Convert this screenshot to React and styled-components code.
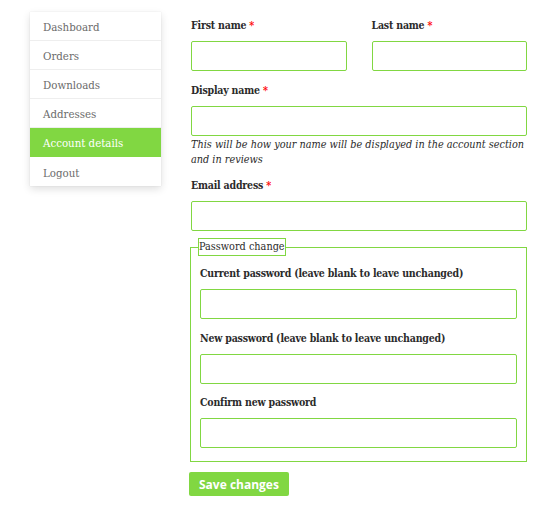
import styled, { createGlobalStyle } from "styled-components"

const GREEN = "#81d742"

const GlobalStyle = createGlobalStyle`
  html, body {
    margin: 0;
    padding: 0;
    background: #fff;
  }
  body {
    font-family: "DejaVu Serif Condensed", "DejaVu Serif", serif;
    color: #2b2b2b;
  }
`

const Page = styled.div`
  display: flex;
  align-items: flex-start;
  gap: 30px;
  padding: 12px 0 0 30px;
`

const Nav = styled.nav`
  width: 131px;
  flex-shrink: 0;
  background: #fff;
  box-shadow: 0 3px 8px rgba(0, 0, 0, 0.13), 0 0 1px rgba(0, 0, 0, 0.12);
`

const NavList = styled.ul`
  list-style: none;
  margin: 0;
  padding: 0;
`

const NavItem = styled.li`
  height: 29px;
  box-sizing: border-box;
  display: flex;
  align-items: center;
  padding: 2px 0 0 13px;
  font-size: 11.4px;
  color: ${props => (props.$active ? "#fff" : "#6b6b6b")};
  background: ${props => (props.$active ? GREEN : "transparent")};
  border-bottom: 1px solid ${props => (props.$active ? GREEN : "#eeeeee")};

  &:last-child {
    border-bottom: none;
  }
`

const Form = styled.form`
  width: 336px;
  padding-top: 5px;
  display: flex;
  flex-direction: column;
`

const FormRow = styled.div`
  display: flex;
  gap: 25px;
  margin-bottom: ${props => props.$spacing ?? "10.5px"};
`

const FormGroup = styled.div`
  display: flex;
  flex-direction: column;
  flex: 1;
  min-width: 0;
`

const Label = styled.label`
  font-size: 10.5px;
  font-weight: bold;
  letter-spacing: -0.2px;
  line-height: 16px;
  margin-bottom: 8px;
  color: #2b2b2b;
  white-space: nowrap;
`

const Required = styled.span`
  color: #ff0000;
`

const Input = styled.input`
  box-sizing: border-box;
  height: 30px;
  width: 100%;
  border: 1px solid ${GREEN};
  border-radius: 2px;
  background: #fff;
  padding: 0 8px;
  font: inherit;
  outline: none;
`

const Help = styled.em`
  margin-top: 1px;
  font-size: 10.8px;
  line-height: 15.4px;
  color: #2b2b2b;
`

const Fieldset = styled.fieldset`
  margin: 0 0 10px -1px;
  padding: 9px 9px 13px 9px;
  border: 1px solid ${GREEN};
  min-width: 0;
`

const Legend = styled.legend`
  font-size: 10.8px;
  line-height: 16px;
  padding: 0;
  margin-left: -2px;
  border: 1px solid ${GREEN};
  color: #2b2b2b;
`

const Button = styled.button`
  align-self: flex-start;
  margin-left: -2px;
  height: 24px;
  padding: 0 10px;
  border: none;
  border-radius: 2px;
  background: ${GREEN};
  color: #fff;
  font-family: "Open Sans", "DejaVu Sans", sans-serif;
  font-weight: bold;
  font-size: 12px;
`

const menu = [
  "Dashboard",
  "Orders",
  "Downloads",
  "Addresses",
  "Account details",
  "Logout",
]

function Field({ label, required, children }) {
  return (
    <FormGroup>
      <Label>
        {label} {required && <Required>*</Required>}
      </Label>
      <Input type="text" />
      {children}
    </FormGroup>
  )
}

export default function App() {
  return (
    <>
      <GlobalStyle />
      <Page>
        <Nav>
          <NavList>
            {menu.map(item => (
              <NavItem key={item} $active={item === "Account details"}>
                {item}
              </NavItem>
            ))}
          </NavList>
        </Nav>
        <Form onSubmit={e => e.preventDefault()}>
          <FormRow>
            <Field label="First name" required />
            <Field label="Last name" required />
          </FormRow>
          <FormRow $spacing="10px">
            <Field label="Display name" required>
              <Help>
                This will be how your name will be displayed in the account
                section and in reviews
              </Help>
            </Field>
          </FormRow>
          <FormRow $spacing="7px">
            <Field label="Email address" required />
          </FormRow>
          <Fieldset>
            <Legend>Password change</Legend>
            <FormRow>
              <Field label="Current password (leave blank to leave unchanged)" />
            </FormRow>
            <FormRow>
              <Field label="New password (leave blank to leave unchanged)" />
            </FormRow>
            <FormRow $spacing="0">
              <Field label="Confirm new password" />
            </FormRow>
          </Fieldset>
          <Button type="submit">Save changes</Button>
        </Form>
      </Page>
    </>
  )
}
